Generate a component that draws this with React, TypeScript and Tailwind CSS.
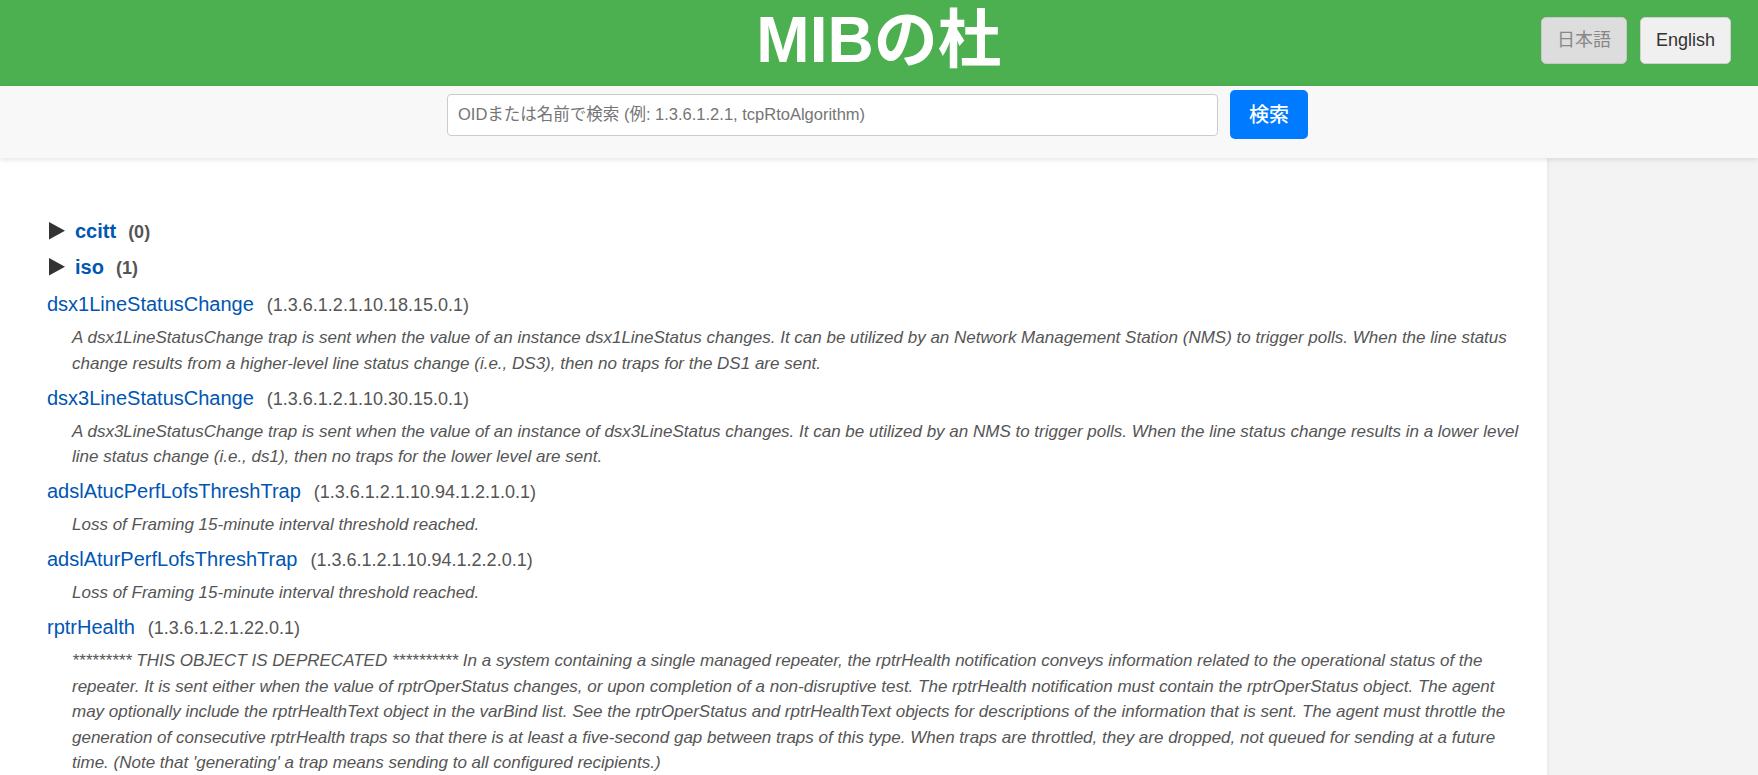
import React from "react";

const FONT = '"Liberation Sans", Arial, "Noto Sans CJK JP", sans-serif';

type Entry = { name: string; oid: string; desc: string };

const entries: Entry[] = [
  {
    name: "dsx1LineStatusChange",
    oid: "(1.3.6.1.2.1.10.18.15.0.1)",
    desc: "A dsx1LineStatusChange trap is sent when the value of an instance dsx1LineStatus changes. It can be utilized by an Network Management Station (NMS) to trigger polls. When the line status change results from a higher-level line status change (i.e., DS3), then no traps for the DS1 are sent.",
  },
  {
    name: "dsx3LineStatusChange",
    oid: "(1.3.6.1.2.1.10.30.15.0.1)",
    desc: "A dsx3LineStatusChange trap is sent when the value of an instance of dsx3LineStatus changes. It can be utilized by an NMS to trigger polls. When the line status change results in a lower level line status change (i.e., ds1), then no traps for the lower level are sent.",
  },
  {
    name: "adslAtucPerfLofsThreshTrap",
    oid: "(1.3.6.1.2.1.10.94.1.2.1.0.1)",
    desc: "Loss of Framing 15-minute interval threshold reached.",
  },
  {
    name: "adslAturPerfLofsThreshTrap",
    oid: "(1.3.6.1.2.1.10.94.1.2.2.0.1)",
    desc: "Loss of Framing 15-minute interval threshold reached.",
  },
  {
    name: "rptrHealth",
    oid: "(1.3.6.1.2.1.22.0.1)",
    desc: "********* THIS OBJECT IS DEPRECATED ********** In a system containing a single managed repeater, the rptrHealth notification conveys information related to the operational status of the repeater. It is sent either when the value of rptrOperStatus changes, or upon completion of a non-disruptive test. The rptrHealth notification must contain the rptrOperStatus object. The agent may optionally include the rptrHealthText object in the varBind list. See the rptrOperStatus and rptrHealthText objects for descriptions of the information that is sent. The agent must throttle the generation of consecutive rptrHealth traps so that there is at least a five-second gap between traps of this type. When traps are throttled, they are dropped, not queued for sending at a future time. (Note that 'generating' a trap means sending to all configured recipients.)",
  },
];

function Triangle() {
  return (
    <svg
      width="16"
      height="18"
      viewBox="0 0 16 18"
      className="self-start mt-[5px] ml-[2px] shrink-0"
    >
      <path d="M0 0 L16 8.8 L0 17.6 Z" fill="#333333" />
    </svg>
  );
}

function TreeRow({ name, num }: { name: string; num: string }) {
  return (
    <div className="flex items-baseline h-[29px] leading-[29px] mb-[7px]">
      <Triangle />
      <a className="ml-[10px] text-[20px] font-bold text-[#0056b3] cursor-pointer">
        {name}
      </a>
      <span className="ml-[12px] text-[18px] font-bold text-[#555555]">{num}</span>
    </div>
  );
}

function EntryItem({ e }: { e: Entry }) {
  return (
    <div className="mb-[6.5px]">
      <div className="leading-[30px]">
        <a className="text-[20px] text-[#0056b3] cursor-pointer">{e.name}</a>
        <span className="ml-[13px] text-[18px] leading-none text-[#555555]">{e.oid}</span>
      </div>
      <p className="ml-[25px] mt-[4px] text-[17px] italic leading-[25.5px] text-[#555555]">
        {e.desc}
      </p>
    </div>
  );
}

export default function App() {
  return (
    <div
      className="w-full min-h-screen bg-white overflow-hidden"
      style={{ fontFamily: FONT }}
    >
      {/* Header */}
      <header className="grid grid-cols-[1fr_auto_1fr] h-[86px] bg-[#4caf50]">
        <div />
        <h1 className="mt-[8px] text-[64px] leading-[64px] font-bold text-white">
          MIBの杜
        </h1>
        <div className="flex justify-end items-start gap-[13px] pr-[27px] pt-[17px]">
          <button className="h-[47px] w-[86px] rounded-[5px] border border-[#c8c8c8] bg-[#dddddd] text-[18px] text-[#888888]">
            日本語
          </button>
          <button className="h-[47px] w-[91px] rounded-[5px] border border-[#d0d0d0] bg-[#f0f0f0] text-[18px] text-[#333333]">
            English
          </button>
        </div>
      </header>

      {/* Search bar */}
      <div className="relative z-10 flex justify-center items-center gap-[12px] h-[72px] pt-[4px] pb-[19px] pr-[3px] bg-[#f8f8f8] shadow-[0_2px_5px_rgba(0,0,0,0.1)]">
        <input
          type="text"
          placeholder="OIDまたは名前で検索 (例: 1.3.6.1.2.1, tcpRtoAlgorithm)"
          className="w-[771px] h-[42px] px-[10px] rounded-[4px] border border-[#cccccc] bg-white text-[16.5px] text-[#333] placeholder:text-[#757575] outline-none"
        />
        <button className="w-[78px] h-[49px] rounded-[5px] bg-[#007bff] text-white text-[20px] font-medium">
          検索
        </button>
      </div>

      {/* Body */}
      <div className="flex min-h-[617px]">
        <main className="flex-1 bg-white pt-[59px] pl-[47px] pr-[22px]">
          <TreeRow name="ccitt" num="(0)" />
          <TreeRow name="iso" num="(1)" />
          {entries.map((e) => (
            <EntryItem key={e.name} e={e} />
          ))}
        </main>
        <aside className="w-[211px] shrink-0 bg-[#f3f3f3] shadow-[inset_3px_0_4px_-2px_rgba(0,0,0,0.05)]" />
      </div>
    </div>
  );
}
